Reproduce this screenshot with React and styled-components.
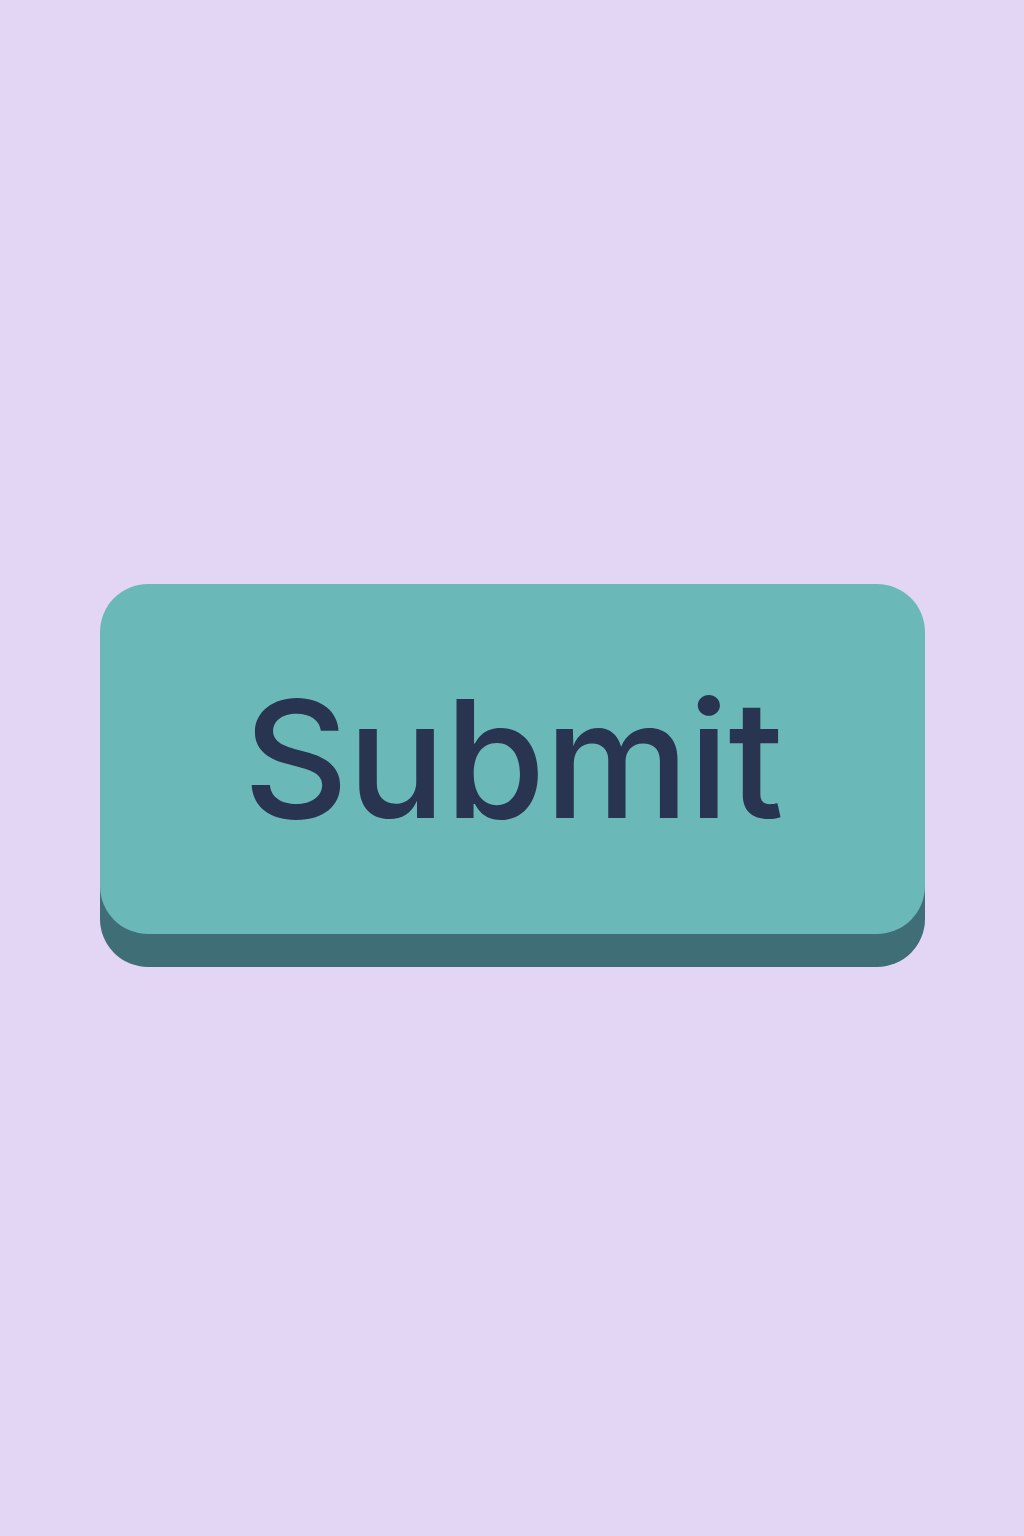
import React from "react";
import styled, { createGlobalStyle } from "styled-components";

const GlobalStyle = createGlobalStyle`
  html, body {
    margin: 0;
    padding: 0;
    background-color: #e3d5f4;
  }
  body {
    font-family: Inter, "Noto Sans", sans-serif;
  }
`;

const Page = styled.div`
  min-height: 1536px;
  display: flex;
  justify-content: center;
  align-items: flex-start;
  padding-top: 584px;
  box-sizing: border-box;
`;

const SubmitButton = styled.button`
  width: 825px;
  height: 350px;
  border: none;
  border-radius: 48px;
  background-color: #6bb8b8;
  box-shadow: 0 33px 0 #3f6e77;
  color: #283450;
  font-family: Inter, "Noto Sans", sans-serif;
  font-size: 163px;
  font-weight: 500;
  letter-spacing: -1px;
  line-height: 1;
  display: flex;
  align-items: center;
  justify-content: center;
  padding: 0 0 2px 2px;
  cursor: pointer;
`;

function App() {
  return (
    <>
      <GlobalStyle />
      <Page>
        <SubmitButton type="button">Submit</SubmitButton>
      </Page>
    </>
  );
}

export default App;
